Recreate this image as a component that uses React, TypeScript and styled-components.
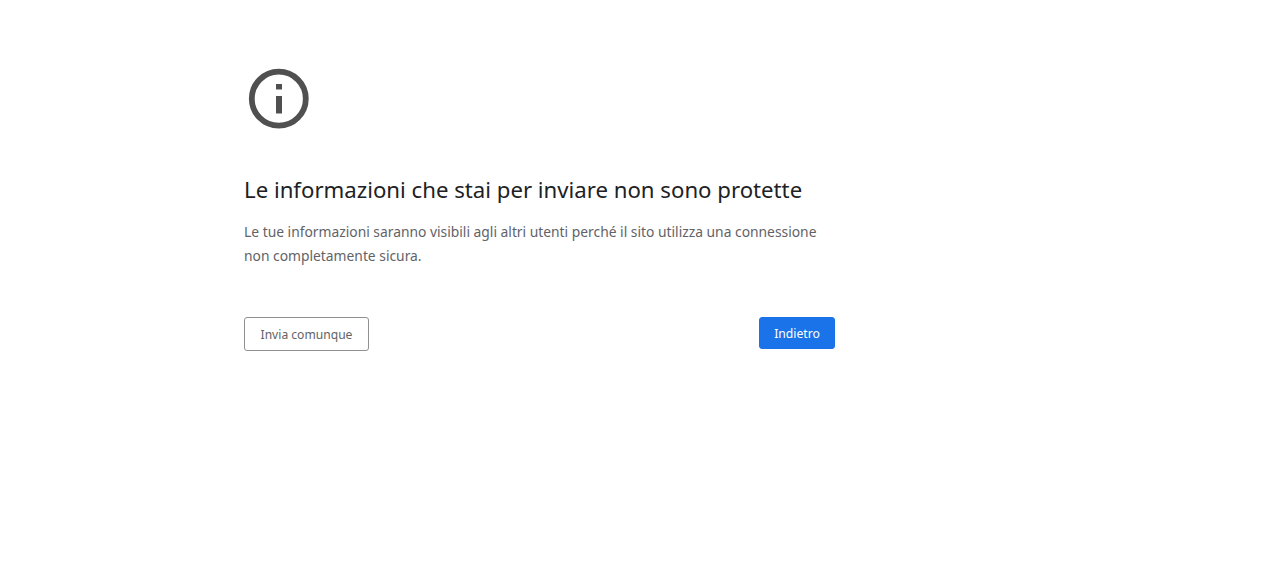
import React from "react";
import styled, { createGlobalStyle } from "styled-components";

const Global = createGlobalStyle`
  html, body { margin: 0; padding: 0; background: #fff; }
  body { font-family: "Noto Sans", "Open Sans", sans-serif; }
`;

const Page = styled.main`
  width: 591px;
  padding: 68px 0 0 244px;
  box-sizing: content-box;
`;

const IconWrap = styled.div`
  height: 62px;
  padding-left: 4px;
  margin-bottom: 45px;
  svg { display: block; }
`;

const Title = styled.h1`
  margin: 0 0 15px;
  font-size: 22.2px;
  line-height: 30px;
  font-weight: 400;
  color: #202124;
`;

const Body = styled.p`
  margin: 0;
  width: 580px;
  font-size: 13.83px;
  line-height: 24px;
  color: #5f6368;
`;

const Actions = styled.div`
  display: flex;
  justify-content: space-between;
  align-items: flex-start;
  margin-top: 49px;
`;

const OutlineButton = styled.button`
  width: 125px;
  height: 34px;
  padding: 0;
  background: #fff;
  border: 1px solid #8f9092;
  border-radius: 3px;
  font: 400 12.1px "Noto Sans", sans-serif;
  color: #5f6368;
`;

const PrimaryButton = styled.button`
  width: 76px;
  height: 32px;
  padding: 0;
  background: #1a73e8;
  border: 1px solid #1a73e8;
  border-radius: 3px;
  font: 400 12.2px "Noto Sans", sans-serif;
  color: #fff;
`;

export default function App() {
  return (
    <>
      <Global />
      <Page>
        <IconWrap>
          <svg width="62" height="62" viewBox="0 0 62 62" fill="none">
            <circle cx="30.8" cy="30.7" r="27" stroke="#505050" strokeWidth="5.8" />
            <rect x="28" y="16" width="6" height="5.5" fill="#505050" />
            <rect x="28" y="28" width="6" height="17.5" fill="#505050" />
          </svg>
        </IconWrap>
        <Title>Le informazioni che stai per inviare non sono protette</Title>
        <Body>
          Le tue informazioni saranno visibili agli altri utenti perché il sito utilizza una connessione non completamente sicura.
        </Body>
        <Actions>
          <OutlineButton>Invia comunque</OutlineButton>
          <PrimaryButton>Indietro</PrimaryButton>
        </Actions>
      </Page>
    </>
  );
}
